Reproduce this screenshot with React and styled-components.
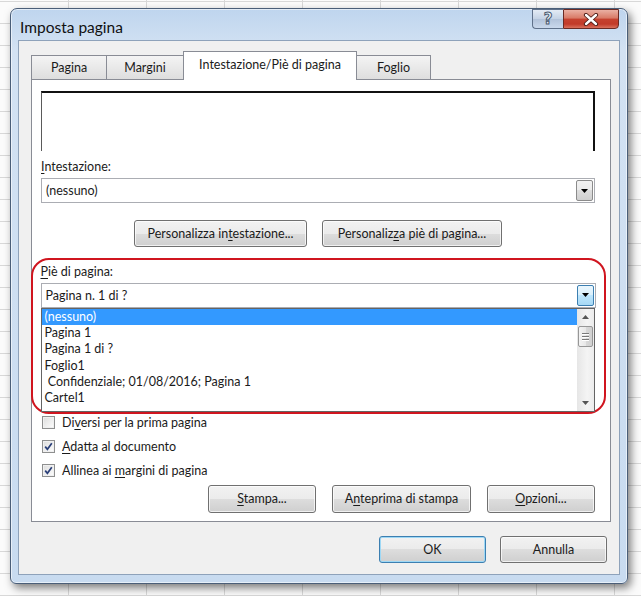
import React from 'react';
import styled, { createGlobalStyle } from 'styled-components';

const GlobalStyle = createGlobalStyle`
  html, body {
    margin: 0;
    padding: 0;
  }
  body {
    font-family: Lato, "Noto Sans", sans-serif;
    font-size: 12.5px;
    color: #1b1b1b;
    background-color: #fbfbfb;
    background-image:
      linear-gradient(to right, #d8d8d8 1px, transparent 1px),
      linear-gradient(to bottom, #d8d8d8 1px, transparent 1px);
    background-size: 78px 22px;
    background-position: 68px 0, 0 1px;
  }
`;

const Page = styled.div`
  width: 641px;
  height: 596px;
  box-sizing: border-box;
  padding: 8px 0 0 10px;
`;

const Window = styled.div`
  width: 618px;
  height: 576px;
  box-sizing: border-box;
  display: flex;
  flex-direction: column;
  padding: 0 7px 8px 7px;
  border: 1px solid #4a5e78;
  border-radius: 7px 7px 6px 6px;
  background: linear-gradient(to bottom, #bfd5ee 0, #d3e2f3 40px, #c8dbf0 100%);
  box-shadow: inset 0 0 0 1px rgba(255, 255, 255, 0.55), 3px 4px 8px rgba(0, 0, 0, 0.5);
`;

const TitleBar = styled.div`
  height: 31px;
  display: flex;
  align-items: flex-start;
  justify-content: space-between;
`;

const Title = styled.div`
  margin-top: 8px;
  padding-left: 2px;
  font-size: 15.5px;
  line-height: 20px;
  color: #111;
`;

const CaptionButtons = styled.div`
  display: flex;
  margin-right: 1px;
`;

const HelpButton = styled.div`
  width: 31px;
  height: 20px;
  box-sizing: border-box;
  border: 1px solid #5f718a;
  border-right: none;
  border-radius: 0 0 0 4px;
  background: linear-gradient(to bottom, #e3ebf5 0%, #c5d3e5 48%, #b2c3da 52%, #c9d8ec 100%);
  display: flex;
  align-items: center;
  justify-content: center;
  font-family: "DejaVu Sans", sans-serif;
  font-weight: bold;
  font-size: 15px;
  color: #eef3f9;
  -webkit-text-stroke: 1px #4a5a70;
`;

const CloseButton = styled.div`
  width: 56px;
  height: 20px;
  box-sizing: border-box;
  border: 1px solid #6b2a23;
  border-radius: 0 0 4px 0;
  background: linear-gradient(to bottom, #eab0a3 0%, #d97b68 44%, #c5412f 52%, #c23a29 78%, #d9705c 100%);
  display: flex;
  align-items: center;
  justify-content: center;
`;

const Client = styled.div`
  flex: 1;
  display: flex;
  flex-direction: column;
  background: #f0f0f0;
  border: 1px solid #8ea2ba;
  padding: 10px 8px 11px 12px;
`;

const TabStrip = styled.div`
  display: flex;
  align-items: flex-end;
  height: 29px;
  margin-bottom: -1px;
  position: relative;
  z-index: 1;
`;

const Tab = styled.div`
  width: ${(p) => p.$w}px;
  box-sizing: border-box;
  height: ${(p) => (p.$active ? 29 : 24)}px;
  margin-bottom: ${(p) => (p.$active ? 0 : 1)}px;
  margin-left: ${(p) => (p.$first ? 0 : -1)}px;
  border: 1px solid #898c95;
  border-bottom: none;
  background: ${(p) =>
    p.$active ? '#ffffff' : 'linear-gradient(to bottom, #f4f4f4 0%, #e9e9e9 50%, #dedede 100%)'};
  display: flex;
  align-items: center;
  justify-content: center;
  padding-bottom: ${(p) => (p.$active ? 3 : 0)}px;
  position: relative;
  z-index: ${(p) => (p.$active ? 2 : 1)};
`;

const Panel = styled.div`
  flex: 1;
  display: flex;
  flex-direction: column;
  background: #fff;
  border: 1px solid #898c95;
  padding: 11px 15px 0 9px;
`;

const Preview = styled.div`
  height: 58px;
  border-top: 2px solid #111;
  border-left: 1px solid #5a5a5a;
  border-right: 2px solid #111;
`;

const FieldLabel = styled.div`
  margin-top: ${(p) => p.$top}px;
  line-height: 16px;
`;

const Key = styled.span`
  text-decoration: underline;
  text-underline-offset: 2px;
`;

const Combo = styled.div`
  margin-top: 3px;
  height: 25px;
  box-sizing: border-box;
  border: 1px solid #abadb3;
  background: #fff;
  display: flex;
  align-items: center;
  justify-content: space-between;
  padding: 0 1px 0 4px;
`;

const ComboArrow = styled.div`
  width: 17px;
  height: 21px;
  box-sizing: border-box;
  border: 1px solid ${(p) => (p.$hot ? '#3c7fb1' : '#8b8b8b')};
  border-radius: 2px;
  background: ${(p) =>
    p.$hot
      ? 'linear-gradient(to bottom, #eaf6fd 0%, #d9f0fc 50%, #bee6fd 50%, #a7d9f5 100%)'
      : 'linear-gradient(to bottom, #f2f2f2 0%, #ebebeb 50%, #dddddd 50%, #cfcfcf 100%)'};
  display: flex;
  align-items: center;
  justify-content: center;
`;

const CenterRow = styled.div`
  margin-top: 17px;
  display: flex;
  justify-content: center;
  gap: 15px;
`;

const RightRow = styled.div`
  margin-top: ${(p) => p.$top}px;
  display: flex;
  justify-content: flex-end;
  gap: ${(p) => p.$gap}px;
  padding-right: ${(p) => p.$pr || 0}px;
`;

const Button = styled.div`
  width: ${(p) => p.$w}px;
  height: ${(p) => p.$h || 27}px;
  box-sizing: border-box;
  border: 1px solid ${(p) => (p.$default ? '#3c7fb1' : '#707070')};
  border-radius: 3px;
  background: linear-gradient(to bottom, #f2f2f2 0%, #ebebeb 50%, #dddddd 50%, #cfcfcf 100%);
  box-shadow: inset 0 0 0 1px ${(p) => (p.$default ? '#9ed8f5' : 'rgba(255,255,255,0.7)')};
  display: flex;
  align-items: center;
  justify-content: center;
  padding-bottom: 1px;
`;

const FooterGroup = styled.div`
  margin: 11px -11px 0 -10px;
  padding: 3.5px 8.5px 0.5px 7.5px;
  border: 2.5px solid #d0151f;
  border-radius: 18px;
`;

const DropList = styled.div`
  display: flex;
  height: 104px;
  box-sizing: border-box;
  border: 1px solid #646464;
  margin-right: 1px;
  background: #fff;
`;

const Items = styled.div`
  flex: 1;
`;

const Item = styled.div`
  height: 16.4px;
  line-height: 16px;
  padding-left: 3px;
  white-space: pre;
  background: ${(p) => (p.$selected ? '#3399ff' : 'transparent')};
  color: ${(p) => (p.$selected ? '#fff' : '#1b1b1b')};
`;

const ScrollBar = styled.div`
  width: 17px;
  display: flex;
  flex-direction: column;
  align-items: center;
  background: linear-gradient(to right, #e6e6e6, #f4f4f4 60%, #ececec);
`;

const ScrollArrow = styled.div`
  height: 16px;
  width: 17px;
  display: flex;
  align-items: center;
  justify-content: center;
  margin-top: ${(p) => (p.$down ? 'auto' : 0)};
`;

const Thumb = styled.div`
  width: 15px;
  height: 21px;
  box-sizing: border-box;
  margin-top: 1px;
  border: 1px solid #979797;
  border-radius: 2px;
  background: linear-gradient(to right, #f3f3f3, #e8e8e8 50%, #d9d9d9 50%, #d0d0d0);
  display: flex;
  flex-direction: column;
  align-items: center;
  justify-content: center;
  gap: 2px;
`;

const Grip = styled.div`
  width: 7px;
  height: 1px;
  background: #7a7a7a;
  box-shadow: 0 1px 0 #fff;
`;

const Checks = styled.div`
  margin-top: -4px;
`;

const CheckRow = styled.div`
  height: 24px;
  display: flex;
  align-items: center;
  gap: 7px;
  padding-left: 1px;
`;

const Box = styled.div`
  width: 13px;
  height: 13px;
  box-sizing: border-box;
  border: 1px solid #8e8f8f;
  background: linear-gradient(135deg, #dcdcdc 0%, #f4f4f4 70%, #ffffff 100%);
  box-shadow: inset 0 0 0 1px #f0f0f0;
  display: flex;
  align-items: center;
  justify-content: center;
`;

const Arrow = ({ up, color = '#000', w = 7, h = 4 }) => (
  <svg width={w} height={h} viewBox="0 0 7 4">
    <path d={up ? 'M0 4 L3.5 0 L7 4 Z' : 'M0 0 L7 0 L3.5 4 Z'} fill={color} />
  </svg>
);

const Check = ({ checked, label }) => (
  <CheckRow>
    <Box>
      {checked && (
        <svg width="9" height="9" viewBox="0 0 9 9">
          <path d="M1.2 4.6 L3.4 7.3 L7.8 1.2" fill="none" stroke="#2a3f78" strokeWidth="1.7" />
        </svg>
      )}
    </Box>
    <span>{label}</span>
  </CheckRow>
);

const footerItems = [
  '(nessuno)',
  'Pagina 1',
  'Pagina 1 di ?',
  'Foglio1',
  ' Confidenziale; 01/08/2016; Pagina 1',
  'Cartel1',
];

export default function App() {
  return (
    <Page>
      <GlobalStyle />
      <Window>
        <TitleBar>
          <Title>Imposta pagina</Title>
          <CaptionButtons>
            <HelpButton>?</HelpButton>
            <CloseButton>
              <svg width="16" height="13" viewBox="0 0 16 13">
                <path d="M3 2 L13 11 M13 2 L3 11" stroke="#4a1a14" strokeWidth="4.2" strokeLinecap="round" />
                <path d="M3 2 L13 11 M13 2 L3 11" stroke="#ffffff" strokeWidth="2.4" strokeLinecap="round" />
              </svg>
            </CloseButton>
          </CaptionButtons>
        </TitleBar>
        <Client>
          <TabStrip>
            <Tab $w={76} $first>Pagina</Tab>
            <Tab $w={78}>Margini</Tab>
            <Tab $w={174} $active>Intestazione/Piè di pagina</Tab>
            <Tab $w={75}>Foglio</Tab>
          </TabStrip>
          <Panel>
            <Preview />
            <FieldLabel $top={8}>
              <Key>I</Key>ntestazione:
            </FieldLabel>
            <Combo>
              <span>(nessuno)</span>
              <ComboArrow>
                <Arrow />
              </ComboArrow>
            </Combo>
            <CenterRow>
              <Button $w={173}>
                Personalizza in<Key>t</Key>estazione...
              </Button>
              <Button $w={180}>
                Personaliz<Key>z</Key>a piè di pagina...
              </Button>
            </CenterRow>
            <FooterGroup>
              <FieldLabel $top={0}>
                <Key>P</Key>iè di pagina:
              </FieldLabel>
              <Combo>
                <span>Pagina n. 1 di ?</span>
                <ComboArrow $hot>
                  <Arrow />
                </ComboArrow>
              </Combo>
              <DropList>
                <Items>
                  {footerItems.map((t, i) => (
                    <Item key={t} $selected={i === 0}>
                      {t}
                    </Item>
                  ))}
                </Items>
                <ScrollBar>
                  <ScrollArrow>
                    <Arrow up color="#555" w={7} h={4} />
                  </ScrollArrow>
                  <Thumb>
                    <Grip />
                    <Grip />
                    <Grip />
                  </Thumb>
                  <ScrollArrow $down>
                    <Arrow color="#555" w={7} h={4} />
                  </ScrollArrow>
                </ScrollBar>
              </DropList>
            </FooterGroup>
            <Checks>
              <Check label={<>Di<Key>v</Key>ersi per la prima pagina</>} />
              <Check checked label={<><Key>A</Key>datta al documento</>} />
              <Check checked label={<>Allinea ai <Key>m</Key>argini di pagina</>} />
            </Checks>
            <RightRow $top={3} $gap={16}>
              <Button $w={108} $h={28}>
                <span><Key>S</Key>tampa...</span>
              </Button>
              <Button $w={139} $h={28}>
                <span>A<Key>n</Key>teprima di stampa</span>
              </Button>
              <Button $w={108} $h={28}>
                <span><Key>O</Key>pzioni...</span>
              </Button>
            </RightRow>
          </Panel>
          <RightRow $top={14} $gap={14} $pr={4}>
            <Button $w={107} $default>OK</Button>
            <Button $w={107}>Annulla</Button>
          </RightRow>
        </Client>
      </Window>
    </Page>
  );
}
